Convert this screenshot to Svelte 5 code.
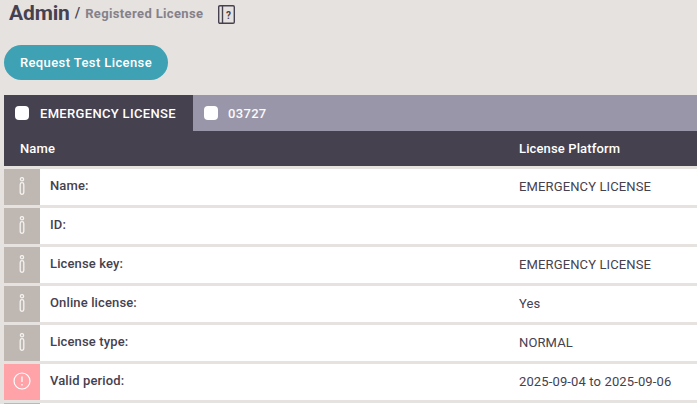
<script>
  const rows = [
    { label: 'Name:', value: 'EMERGENCY LICENSE' },
    { label: 'ID:', value: '' },
    { label: 'License key:', value: 'EMERGENCY LICENSE' },
    { label: 'Online license:', value: 'Yes' },
    { label: 'License type:', value: 'NORMAL' },
    { label: 'Valid period:', value: '2025-09-04 to 2025-09-06', warn: true },
    { label: '', value: '' }
  ];
</script>

<div class="page">
  <header class="title">
    <h1>Admin</h1>
    <span class="slash">/</span>
    <span class="crumb">Registered License</span>
    <svg class="book" width="17" height="19" viewBox="0 0 17 19" fill="none" stroke="#45414f" stroke-width="1.4">
      <rect x="0.7" y="0.7" width="15.6" height="17.6" rx="1.2" />
      <line x1="4.5" y1="0.7" x2="4.5" y2="18.3" />
      <text x="10.5" y="13.5" text-anchor="middle" class="q">?</text>
    </svg>
  </header>

  <button class="request">Request Test License</button>

  <div class="panel">
    <div class="tabs">
      <div class="tab active"><span class="check"></span>EMERGENCY LICENSE</div>
      <div class="tab"><span class="check second"></span>03727</div>
    </div>
    <div class="head">
      <div class="c-name">Name</div>
      <div class="c-val">License Platform</div>
    </div>
    {#each rows as row}
      <div class="row">
        <div class="icon" class:warn={row.warn}>
          {#if row.warn}
            <svg width="18" height="18" viewBox="0 0 18 18" fill="none" stroke="#fff">
              <circle cx="9" cy="9" r="8" stroke-width="1.2" />
              <line x1="9" y1="4.5" x2="9" y2="10" stroke-width="1.3" />
              <line x1="9" y1="12" x2="9" y2="13.4" stroke-width="1.3" />
            </svg>
          {:else if row.label}
            <svg width="6" height="18" viewBox="0 0 6 18" fill="none" stroke="#f4f2f0" stroke-width="1.3">
              <circle cx="3" cy="2.2" r="1.6" />
              <rect x="1.2" y="5.7" width="3.6" height="11.6" rx="1.8" />
            </svg>
          {/if}
        </div>
        <div class="label">{row.label}</div>
        <div class="value">{row.value}</div>
      </div>
    {/each}
  </div>
</div>

<style>
  :global(body) {
    margin: 0;
    background: #e6e2df;
    overflow: hidden;
  }
  .page {
    height: 404px;
    overflow: hidden;
    padding-left: 4px;
    font-family: Roboto, sans-serif;
    color: #45414f;
  }
  .title {
    display: flex;
    align-items: center;
    height: 26px;
    margin-left: 5px;
  }
  h1 {
    margin: 0;
    font-size: 21px;
    font-weight: 700;
    letter-spacing: -0.15px;
    line-height: 26px;
    color: #45414f;
  }
  .slash {
    margin-left: 5px;
    font-size: 14px;
    font-weight: 500;
  }
  .crumb {
    margin-left: 5px;
    font-size: 13px;
    font-weight: 700;
    color: #85818a;
    letter-spacing: 0.36px;
  }
  .book {
    margin-left: 15px;
    margin-top: 2px;
  }
  .q {
    font-family: Roboto, sans-serif;
    font-size: 10px;
    font-weight: 700;
    fill: #45414f;
    stroke: none;
  }
  .request {
    display: block;
    margin-top: 19px;
    width: 164px;
    height: 35px;
    border: none;
    border-radius: 18px;
    background: #3fa1b4;
    color: #fff;
    font-family: Roboto, sans-serif;
    font-size: 13px;
    font-weight: 500;
    letter-spacing: 0.4px;
    padding: 0;
  }
  .panel {
    margin-top: 15px;
  }
  .tabs {
    display: flex;
    height: 36px;
    background: #9996aa;
    color: #fff;
    font-size: 13px;
    letter-spacing: 0.33px;
    font-weight: 500;
  }
  .tab {
    display: flex;
    align-items: center;
    padding: 0 11px;
    color: #fbfafc;
  }
  .tab.active {
    background: #45414f;
    color: #fff;
    padding: 0 16px 0 11px;
    width: 162px;
  }
  .check {
    width: 14px;
    height: 14px;
    border-radius: 4px;
    background: #fff;
    margin-right: 11px;
    flex: none;
  }
  .check.second {
    margin-right: 10px;
  }
  .head {
    display: flex;
    align-items: center;
    height: 35px;
    background: #45414f;
    color: #fff;
    font-size: 13px;
    font-weight: 500;
    letter-spacing: 0.13px;
    margin-bottom: 3px;
  }
  .c-name {
    width: 515px;
    padding-left: 16px;
    box-sizing: border-box;
  }
  .row {
    display: flex;
    align-items: stretch;
    height: 36px;
    margin-bottom: 3px;
    background: #fff;
    font-size: 13px;
  }
  .icon {
    width: 36px;
    flex: none;
    box-sizing: border-box;
    padding-bottom: 2px;
    background: #bfb8b2;
    display: flex;
    align-items: center;
    justify-content: center;
  }
  .icon.warn {
    background: #ffa3a8;
  }
  .label {
    width: 479px;
    flex: none;
    box-sizing: border-box;
    padding-left: 10px;
    padding-top: 9px;
    font-weight: 500;
    letter-spacing: 0.13px;
    line-height: 16px;
  }
  .value {
    padding-top: 10px;
    line-height: 16px;
    font-weight: 400;
    letter-spacing: 0.13px;
  }
</style>
